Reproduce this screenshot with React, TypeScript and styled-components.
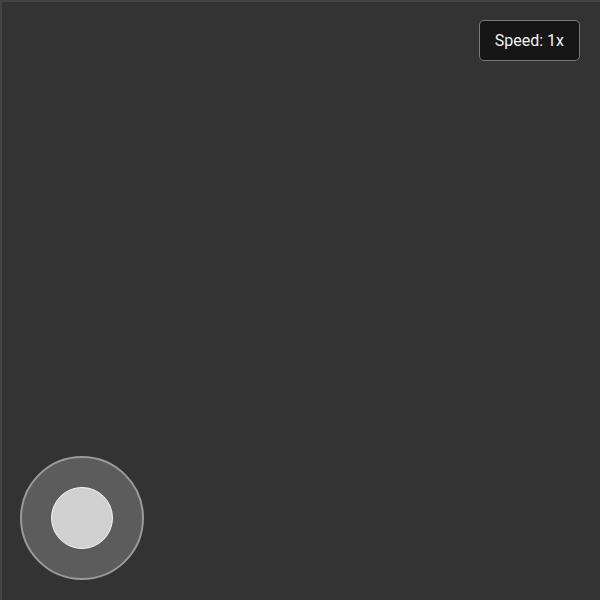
import React from "react";
import styled, { createGlobalStyle } from "styled-components";

const Global = createGlobalStyle`
  html, body { margin: 0; padding: 0; background: #333333; }
  body { font-family: Roboto, "Liberation Sans", sans-serif; }
`;

const Stage = styled.div`
  position: relative;
  width: 600px;
  height: 600px;
  box-sizing: border-box;
  background: #333333;
  border-top: 2px solid #444444;
  border-left: 2px solid #444444;
  overflow: hidden;
`;

const SpeedButton = styled.button`
  position: absolute;
  top: 18px;
  right: 20px;
  height: 41px;
  padding: 0 15px;
  background: #161616;
  color: #f2f2f2;
  border: 1px solid #7a7a7a;
  border-radius: 5px;
  font-family: Roboto, "Liberation Sans", sans-serif;
  font-size: 16px;
  cursor: pointer;
`;

const JoystickBase = styled.div`
  position: absolute;
  left: 18px;
  top: 454px;
  width: 124px;
  height: 124px;
  box-sizing: border-box;
  border-radius: 50%;
  background: #5c5c5c;
  border: 2px solid #9a9a9a;
  display: flex;
  align-items: center;
  justify-content: center;
`;

const Knob = styled.div`
  width: 62px;
  height: 62px;
  box-sizing: border-box;
  border-radius: 50%;
  background: #d1d1d1;
  border: 1px solid #f4f4f4;
`;

export default function App() {
  return (
    <>
      <Global />
      <Stage>
        <SpeedButton>Speed: 1x</SpeedButton>
        <JoystickBase>
          <Knob />
        </JoystickBase>
      </Stage>
    </>
  );
}
